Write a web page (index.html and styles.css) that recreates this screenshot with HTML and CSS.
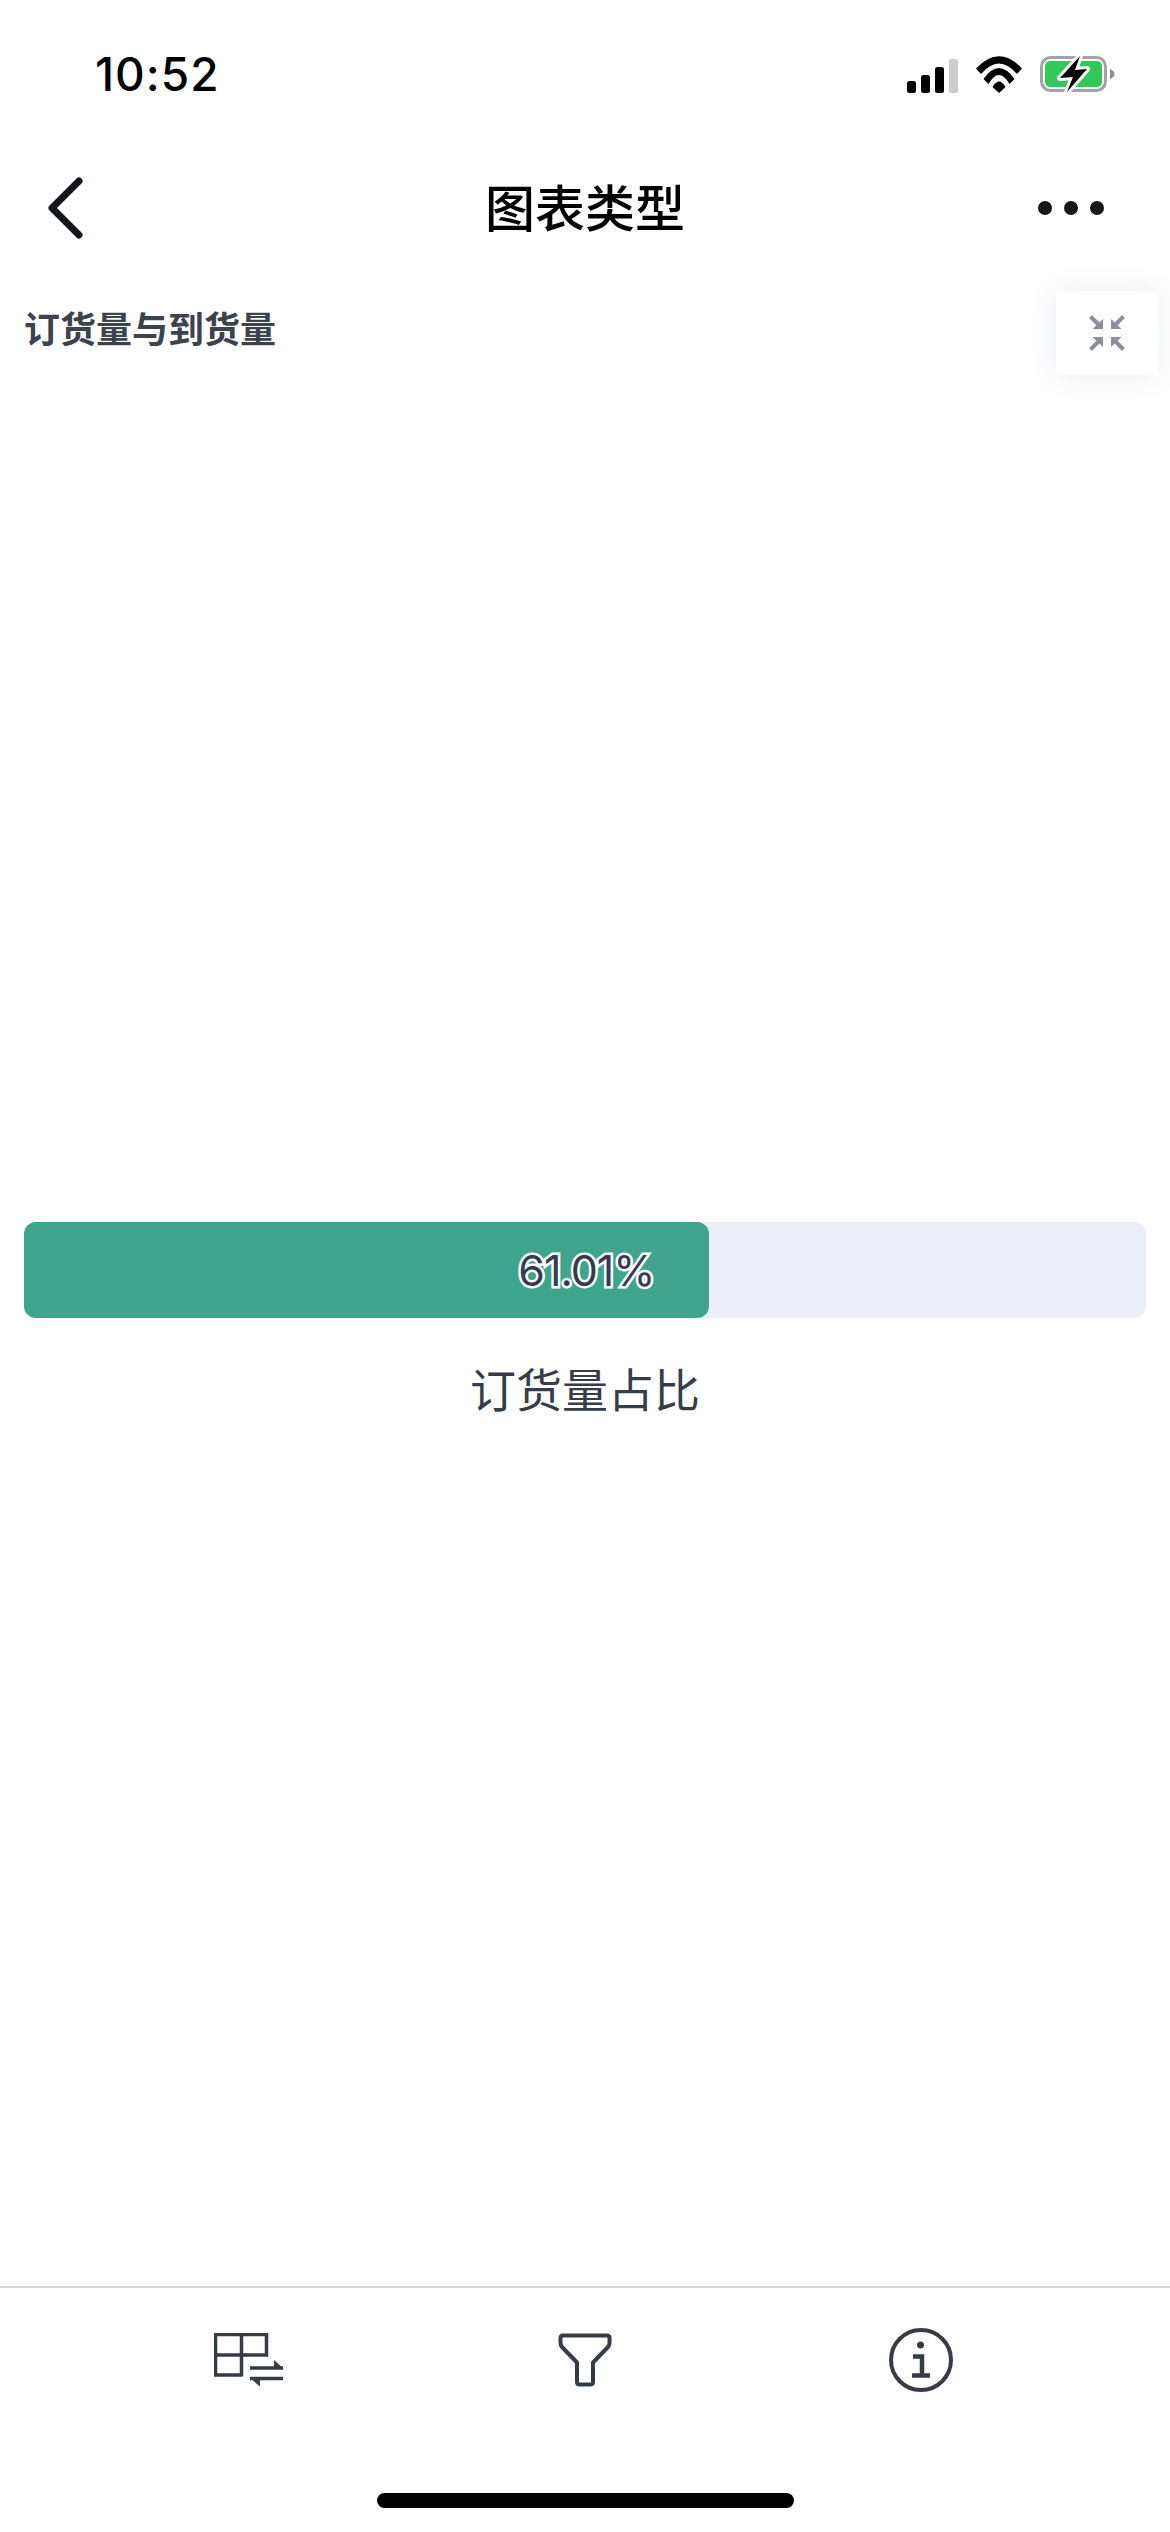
FILE: index.html
```html
<!DOCTYPE html>
<html>

<head>
    <meta charset="utf-8">
    <title>图表类型</title>
    <link rel="stylesheet" href="styles.css">
</head>

<body>
    <div class="app">
        <div class="status-bar">
            <span class="time">10:52</span>
            <div class="status-icons">
                <svg class="icon-signal" width="51" height="34" viewBox="0 0 51 34">
                    <rect x="0" y="22" width="9" height="12" rx="2.5" fill="#000" />
                    <rect x="14" y="16" width="9" height="18" rx="2.5" fill="#000" />
                    <rect x="28" y="8" width="9" height="26" rx="2.5" fill="#000" />
                    <rect x="42" y="0" width="9" height="34" rx="2.5" fill="#ccc" />
                </svg>
                <svg class="icon-wifi" width="48" height="37" viewBox="0 0 48 37">
                    <path d="M1 12.5Q24 -12 47 12.5L42 18Q24 -3 6 18Z" fill="#000" />
                    <path d="M8.5 23Q24 1 39.5 23L34.5 28Q24 10 13.5 28Z" fill="#000" />
                    <path d="M17.5 31Q24 20 30.5 31L24 37Z" fill="#000" />
                </svg>
                <svg class="icon-battery" width="75" height="38" viewBox="0 0 75 38">
                    <rect x="1.5" y="2.5" width="64" height="33" rx="9" fill="none" stroke="#a3a3a3" stroke-width="3" />
                    <rect x="5" y="6" width="57" height="26" rx="5" fill="#34c759" />
                    <path d="M70 14Q74.500 16 74.500 19Q74.500 22 70 24Z" fill="#8e8e8e" />
                    <path d="M40 1L20 23L33 22L27 37L47 14L35 15Z" fill="#000" stroke="#fff" stroke-width="6" paint-order="stroke" stroke-linejoin="round" />
                </svg>
            </div>
        </div>

        <div class="nav-bar">
            <svg class="back" width="40" height="64" viewBox="0 0 40 64">
                <path d="M33 5L6 32L33 59" fill="none" stroke="#14171b" stroke-width="7" stroke-linecap="round" stroke-linejoin="round" />
            </svg>
            <h1 class="nav-title">图表类型</h1>
            <div class="more">
                <span class="dot"></span>
                <span class="dot"></span>
                <span class="dot"></span>
            </div>
        </div>

        <div class="chart">
            <h2 class="chart-title">订货量与到货量</h2>

            <div class="collapse-btn">
                <svg width="36" height="36" viewBox="0 0 36 36">
                    <g id="arrow-corner">
                        <path d="M1.500 1.500L10 10" stroke="#8b8f9b" stroke-width="4" fill="none" />
                        <path d="M14 4V14H3.500Z" fill="#8b8f9b" />
                    </g>
                    <use href="#arrow-corner" transform="translate(36 0) scale(-1 1)" />
                    <use href="#arrow-corner" transform="translate(0 36) scale(1 -1)" />
                    <use href="#arrow-corner" transform="translate(36 36) scale(-1 -1)" />
                </svg>
            </div>

            <div class="gauge">
                <div class="gauge-fill" style="width: 61.01%">
                    <span class="gauge-value">61.01%</span>
                </div>
            </div>
            <p class="gauge-label">订货量占比</p>
        </div>

        <div class="tab-bar">
            <div class="tab">
                <svg width="70" height="54" viewBox="0 0 70 54">
                    <path d="M28 42H1.500V1.500H52.500V23.500M0 22H54M27.500 1.500V43.500M36 35H69M36 45.500H69" fill="none" stroke="#363c45" stroke-width="3.500" />
                    <path d="M60 27L69.500 35.500H60ZM36 45H46V53.500Z" fill="#363c45" />
                </svg>
            </div>
            <div class="tab">
                <svg width="54" height="54" viewBox="0 0 54 54">
                    <path d="M5 2.500H49Q51.500 2.500 51.500 5V10Q51.500 12 50 14L35 29.500V49Q35 51.500 32 51.500H22Q19 51.500 19 49V29.500L4 14Q2.500 12 2.500 10V5Q2.500 2.500 5 2.500Z" fill="none" stroke="#363c45" stroke-width="4" stroke-linejoin="round" />
                </svg>
            </div>
            <div class="tab">
                <svg width="64" height="64" viewBox="0 0 64 64">
                    <circle cx="32" cy="32" r="30" fill="none" stroke="#363c45" stroke-width="4" />
                    <circle cx="31.500" cy="17" r="3.500" fill="#363c45" />
                    <path d="M24 28.500H33V47.500M23 47.500H41" fill="none" stroke="#363c45" stroke-width="4.500" />
                </svg>
            </div>
        </div>

        <div class="home-area">
            <div class="home-indicator"></div>
        </div>
    </div>
</body>

</html>
```

FILE: styles.css
```css
* {
    box-sizing: border-box;
}

body {
    margin: 0;
    background-color: #fff;
    font-family: 'Inter', 'Noto Sans CJK SC', sans-serif;
}

.app {
    display: flex;
    flex-direction: column;
    height: 2532px;
    overflow: hidden;
}

/* status bar */
.status-bar {
    display: flex;
    align-items: center;
    justify-content: space-between;
    height: 150px;
    padding: 0 55px 2px 95px;
}

.time {
    font-size: 46px;
    font-weight: 500;
    letter-spacing: 1px;
    color: #000;
}

.status-icons {
    display: flex;
    align-items: flex-end;
    gap: 17px;
}

/* nav */
.nav-bar {
    display: grid;
    grid-template-columns: 1fr auto 1fr;
    align-items: center;
    height: 116px;
    padding: 0 66px 0 46px;
}

.back {
    display: block;
}

.nav-title {
    margin: 0 0 6px 20px;
    font-family: 'Noto Sans CJK SC', sans-serif;
    font-size: 50px;
    font-weight: 500;
    line-height: 60px;
    color: #000;
}

.more {
    display: flex;
    justify-content: flex-end;
    gap: 12px;
}

.dot {
    width: 14px;
    height: 14px;
    border-radius: 50%;
    background-color: #14171b;
}

/* chart */
.chart {
    position: relative;
    flex: 1;
    padding: 42px 24px 0;
}

.chart-title {
    margin: 0;
    font-family: 'Noto Sans CJK SC', sans-serif;
    font-size: 36px;
    font-weight: 700;
    line-height: 38px;
    color: #3d424c;
}

.collapse-btn {
    position: absolute;
    top: 25px;
    right: 12px;
    display: flex;
    align-items: center;
    justify-content: center;
    width: 102px;
    height: 84px;
    background-color: #fff;
    box-shadow: 0 0 24px rgba(120, 130, 160, 0.14);
}

.gauge {
    height: 96px;
    margin-top: 876px;
    border-radius: 12px;
    background-color: #ebeef6;
}

.gauge-fill {
    display: flex;
    align-items: center;
    justify-content: flex-end;
    height: 100%;
    padding-right: 54px;
    border-radius: 12px;
    background-color: #3fa48c;
}

.gauge-value {
    font-size: 43px;
    letter-spacing: -1px;
    color: #363c4e;
    -webkit-text-stroke: 5px #fff;
    paint-order: stroke fill;
}

.gauge-label {
    margin: 39px 0 0;
    font-family: 'Noto Sans CJK SC', sans-serif;
    font-size: 46px;
    line-height: 60px;
    text-align: center;
    color: #373d47;
}

/* bottom */
.tab-bar {
    display: grid;
    grid-template-columns: repeat(3, 1fr);
    height: 146px;
    padding: 0 81px;
    border-top: 2px solid #d8d8d8;
}

.tab {
    display: flex;
    align-items: center;
    justify-content: center;
}

.home-area {
    display: flex;
    justify-content: center;
    height: 100px;
    padding-top: 61px;
}

.home-indicator {
    width: 417px;
    height: 15px;
    border-radius: 8px;
    background-color: #000;
}
```
